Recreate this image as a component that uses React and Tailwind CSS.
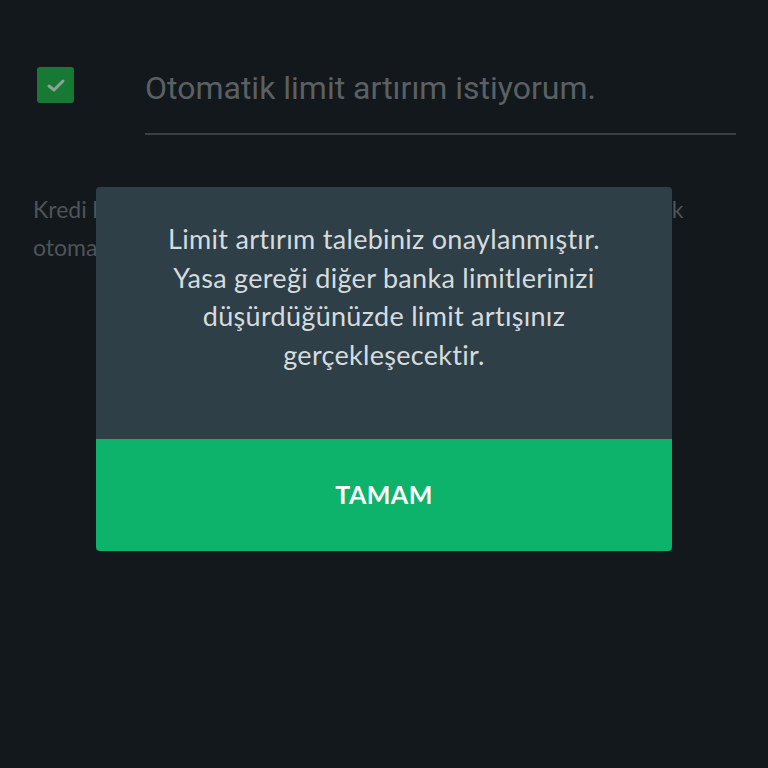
export default function App() {
  return (
    <div className="relative h-[768px] w-[768px] overflow-hidden bg-[#12181b]">
      <div className="flex items-start pt-[67px]">
        <div className="ml-[37px] flex h-[36px] w-[37px] items-center justify-center rounded-[3px] bg-[#177a34]">
          <svg width="20" height="15" viewBox="0 0 20 15" fill="none">
            <path d="M3 8 L8 12 L17 3" stroke="#8fa096" strokeWidth="3" strokeLinecap="round" strokeLinejoin="round" />
          </svg>
        </div>
        <div className="ml-[71px] mr-[32px] flex-1">
          <div
            className="h-[42px] text-[32px] leading-[42px] text-[#5b6063]"
            style={{ fontFamily: "Roboto, sans-serif" }}
          >
            Otomatik limit artırım istiyorum.
          </div>
          <div className="mt-[24px] h-[2px] bg-[#3b4043]" />
        </div>
      </div>

      <p
        className="mt-[55px] whitespace-nowrap pl-[33px] text-[23px] leading-[38px] text-[#4e5457]"
        style={{ fontFamily: "Lato, sans-serif" }}
      >
        Kredi kartı limitiniz, bankamızın belirlediği kriterlere uygun olarak
        <br />
        otomatik olarak artırılacaktır.
      </p>

      <div className="absolute left-[96px] top-[187px] flex w-[576px] flex-col overflow-hidden rounded-[4px]">
        <div
          className="flex h-[252px] flex-col items-center bg-[#2e3f48] pt-[33px] text-center text-[27px] leading-[38.7px] tracking-[0.3px] text-[#d6dbde]"
          style={{ fontFamily: "Lato, sans-serif" }}
        >
          <span>Limit artırım talebiniz onaylanmıştır.</span>
          <span>Yasa gereği diğer banka limitlerinizi</span>
          <span>düşürdüğünüzde limit artışınız</span>
          <span>gerçekleşecektir.</span>
        </div>
        <button
          type="button"
          className="flex h-[112px] items-center justify-center bg-[#0db36a] text-[25px] font-bold tracking-[0.5px] text-white"
          style={{ fontFamily: "Lato, sans-serif" }}
        >
          TAMAM
        </button>
      </div>
    </div>
  );
}
